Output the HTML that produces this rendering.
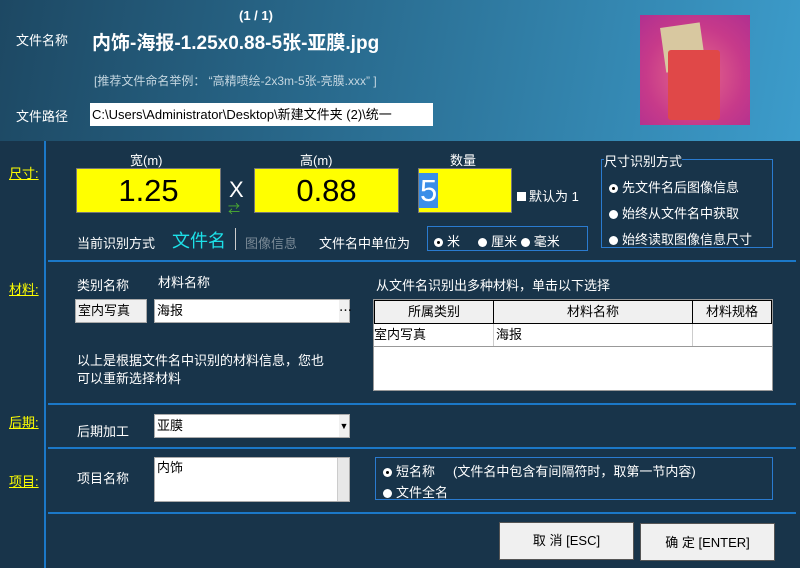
<!DOCTYPE html>
<html><head><meta charset="utf-8"><style>
*{margin:0;padding:0;box-sizing:border-box}
body{width:800px;height:568px;overflow:hidden;background:#18344a;font-family:"Liberation Sans","Noto Sans CJK SC",sans-serif;color:#fff;font-size:13px;position:relative}
.a{position:absolute;white-space:nowrap}
.hdr{position:absolute;left:0;top:0;width:800px;height:141px;background:linear-gradient(100deg,#1d4863 0%,#2a6d91 45%,#3c9ccb 100%)}
.y{background:#ff0;color:#000;border:1px solid #777;text-align:center;font-size:31px;line-height:44px}
.hl{position:absolute;height:2px;background:#1b78c8;left:48px;width:748px}
.lab{color:#ff0;text-decoration:underline;font-size:13px}
.box{position:absolute;border:1px solid #2a7bd0}
.rad{display:inline-block;width:9px;height:9px;border-radius:50%;background:#fff;margin-right:4px;vertical-align:-1px;position:relative}
.rad.on::after{content:"";position:absolute;left:3px;top:3px;width:3px;height:3px;background:#000;border-radius:50%}
.inp{position:absolute;background:#fff;color:#000;border:1px solid #aaa;font-size:13px;line-height:22px;padding-left:2px}
.btn{position:absolute;background:#f0f0f0;color:#000;border:1px solid #555;text-align:center;font-size:13px}
</style></head><body>
<div class="hdr"></div>
<div class="a" style="left:16px;top:30px;font-size:13px">文件名称</div>
<div class="a" style="left:239px;top:8px;font-size:13px;font-weight:bold">(1 / 1)</div>
<div class="a" style="left:92px;top:28px;font-size:19px;font-weight:bold">内饰-海报-1.25x0.88-5张-亚膜.jpg</div>
<div class="a" style="left:94px;top:72px;font-size:12px;color:#c4d6e0">[推荐文件命名举例： “高精喷绘-2x3m-5张-亮膜.xxx” ]</div>
<div class="a" style="left:16px;top:106px;font-size:13px">文件路径</div>
<div class="inp" style="left:90px;top:103px;width:343px;height:23px;border:none;font-size:13px;line-height:23px;overflow:hidden">C:\Users\Administrator\Desktop\新建文件夹 (2)\统一</div>
<div class="a" style="left:640px;top:15px;width:110px;height:110px;background:radial-gradient(circle at 50% 55%,#e86a8a,#c73a8a 60%,#b03090);"></div>
<div class="a" style="left:663px;top:25px;width:40px;height:45px;background:#d8c8a0;transform:rotate(-8deg)"></div>
<div class="a" style="left:668px;top:50px;width:52px;height:70px;background:#e04848;border-radius:3px"></div>

<div class="a" style="left:44px;top:141px;width:2px;height:427px;background:#1b78c8"></div>
<div class="a lab" style="left:9px;top:163px">尺寸:</div>
<div class="a lab" style="left:9px;top:279px">材料:</div>
<div class="a lab" style="left:9px;top:412px">后期:</div>
<div class="a lab" style="left:9px;top:471px">项目:</div>

<div class="a" style="left:130px;top:150px">宽(m)</div>
<div class="a" style="left:300px;top:150px">高(m)</div>
<div class="a" style="left:450px;top:150px">数量</div>
<div class="a y" style="left:76px;top:168px;width:145px;height:45px">1.25</div>
<div class="a" style="left:229px;top:177px;font-size:22px">X</div>
<div class="a" style="left:228px;top:200px;font-size:12px;color:#4caf30">⇄</div>
<div class="a y" style="left:254px;top:168px;width:145px;height:45px">0.88</div>
<div class="a y" style="left:418px;top:168px;width:94px;height:45px;text-align:left"><span style="background:#3a8ee8;color:#fff;padding:0 1px">5</span></div>
<div class="a" style="left:517px;top:186px;font-size:13px"><span style="display:inline-block;width:9px;height:9px;background:#fff;margin-right:3px"></span>默认为 1</div>
<div class="box" style="left:601px;top:159px;width:172px;height:89px"></div>
<div class="a" style="left:604px;top:151px;background:#18344a;font-size:13px">尺寸识别方式</div>
<div class="a" style="left:609px;top:177px"><span class="rad on"></span>先文件名后图像信息</div>
<div class="a" style="left:609px;top:203px"><span class="rad"></span>始终从文件名中获取</div>
<div class="a" style="left:609px;top:229px"><span class="rad"></span>始终读取图像信息尺寸</div>
<div class="a" style="left:77px;top:233px">当前识别方式</div>
<div class="a" style="left:172px;top:227px;font-size:18px;color:#1de0e8">文件名</div>
<div class="a" style="left:235px;top:228px;width:1px;height:22px;background:#ccc"></div>
<div class="a" style="left:245px;top:233px;color:#7a8a96">图像信息</div>
<div class="a" style="left:319px;top:233px">文件名中单位为</div>
<div class="box" style="left:427px;top:226px;width:161px;height:25px"></div>
<div class="a" style="left:434px;top:231px"><span class="rad on"></span>米 &nbsp;&nbsp;&nbsp;&nbsp;<span class="rad"></span>厘米 <span class="rad"></span>毫米</div>
<div class="hl" style="top:260px"></div>

<div class="a" style="left:77px;top:275px">类别名称</div>
<div class="a" style="left:158px;top:272px">材料名称</div>
<div class="a" style="left:376px;top:275px">从文件名识别出多种材料，单击以下选择</div>
<div class="inp" style="left:75px;top:299px;width:72px;height:24px;background:#f0f0f0">室内写真</div>
<div class="inp" style="left:154px;top:299px;width:196px;height:24px">海报<span style="position:absolute;right:0;top:0;width:10px;background:#f0f0f0;text-align:center">⋯</span></div>
<div class="a" style="left:77px;top:352px;line-height:18px">以上是根据文件名中识别的材料信息，您也<br>可以重新选择材料</div>
<div class="a" style="left:373px;top:299px;width:400px;height:92px;background:#fff;border:1px solid #999;color:#000">
<div style="display:flex;height:24px;background:#f0f0f0;line-height:22px;text-align:center;border:1px solid #000">
<div style="width:119px;border-right:1px solid #000">所属类别</div><div style="width:199px;border-right:1px solid #000">材料名称</div><div style="flex:1">材料规格</div></div>
<div style="display:flex;height:23px;line-height:22px;border-bottom:1px solid #999"><div style="width:120px;border-right:1px solid #ccc">室内写真</div><div style="width:199px;border-right:1px solid #ccc;padding-left:2px">海报</div></div>
</div>
<div class="hl" style="top:403px"></div>
<div class="a" style="left:77px;top:421px">后期加工</div>
<div class="inp" style="left:154px;top:414px;width:196px;height:24px">亚膜<span style="position:absolute;right:0;top:0;width:10px;background:#f0f0f0;font-size:9px;text-align:center">▼</span></div>
<div class="hl" style="top:447px"></div>
<div class="a" style="left:77px;top:468px">项目名称</div>
<div class="inp" style="left:154px;top:457px;width:196px;height:45px;line-height:20px">内饰<span style="position:absolute;right:0;top:0;width:12px;height:43px;background:#e8e8e8;border-left:1px solid #ccc"></span></div>
<div class="box" style="left:375px;top:457px;width:398px;height:43px"></div>
<div class="a" style="left:383px;top:461px"><span class="rad on"></span>短名称 &nbsp;&nbsp;&nbsp;&nbsp;(文件名中包含有间隔符时，取第一节内容)</div>
<div class="a" style="left:383px;top:482px"><span class="rad"></span>文件全名</div>
<div class="hl" style="top:512px"></div>
<div class="btn" style="left:499px;top:522px;width:135px;height:38px;line-height:36px">取 消 [ESC]</div>
<div class="btn" style="left:640px;top:523px;width:135px;height:38px;line-height:38px">确 定 [ENTER]</div>
</body></html>
